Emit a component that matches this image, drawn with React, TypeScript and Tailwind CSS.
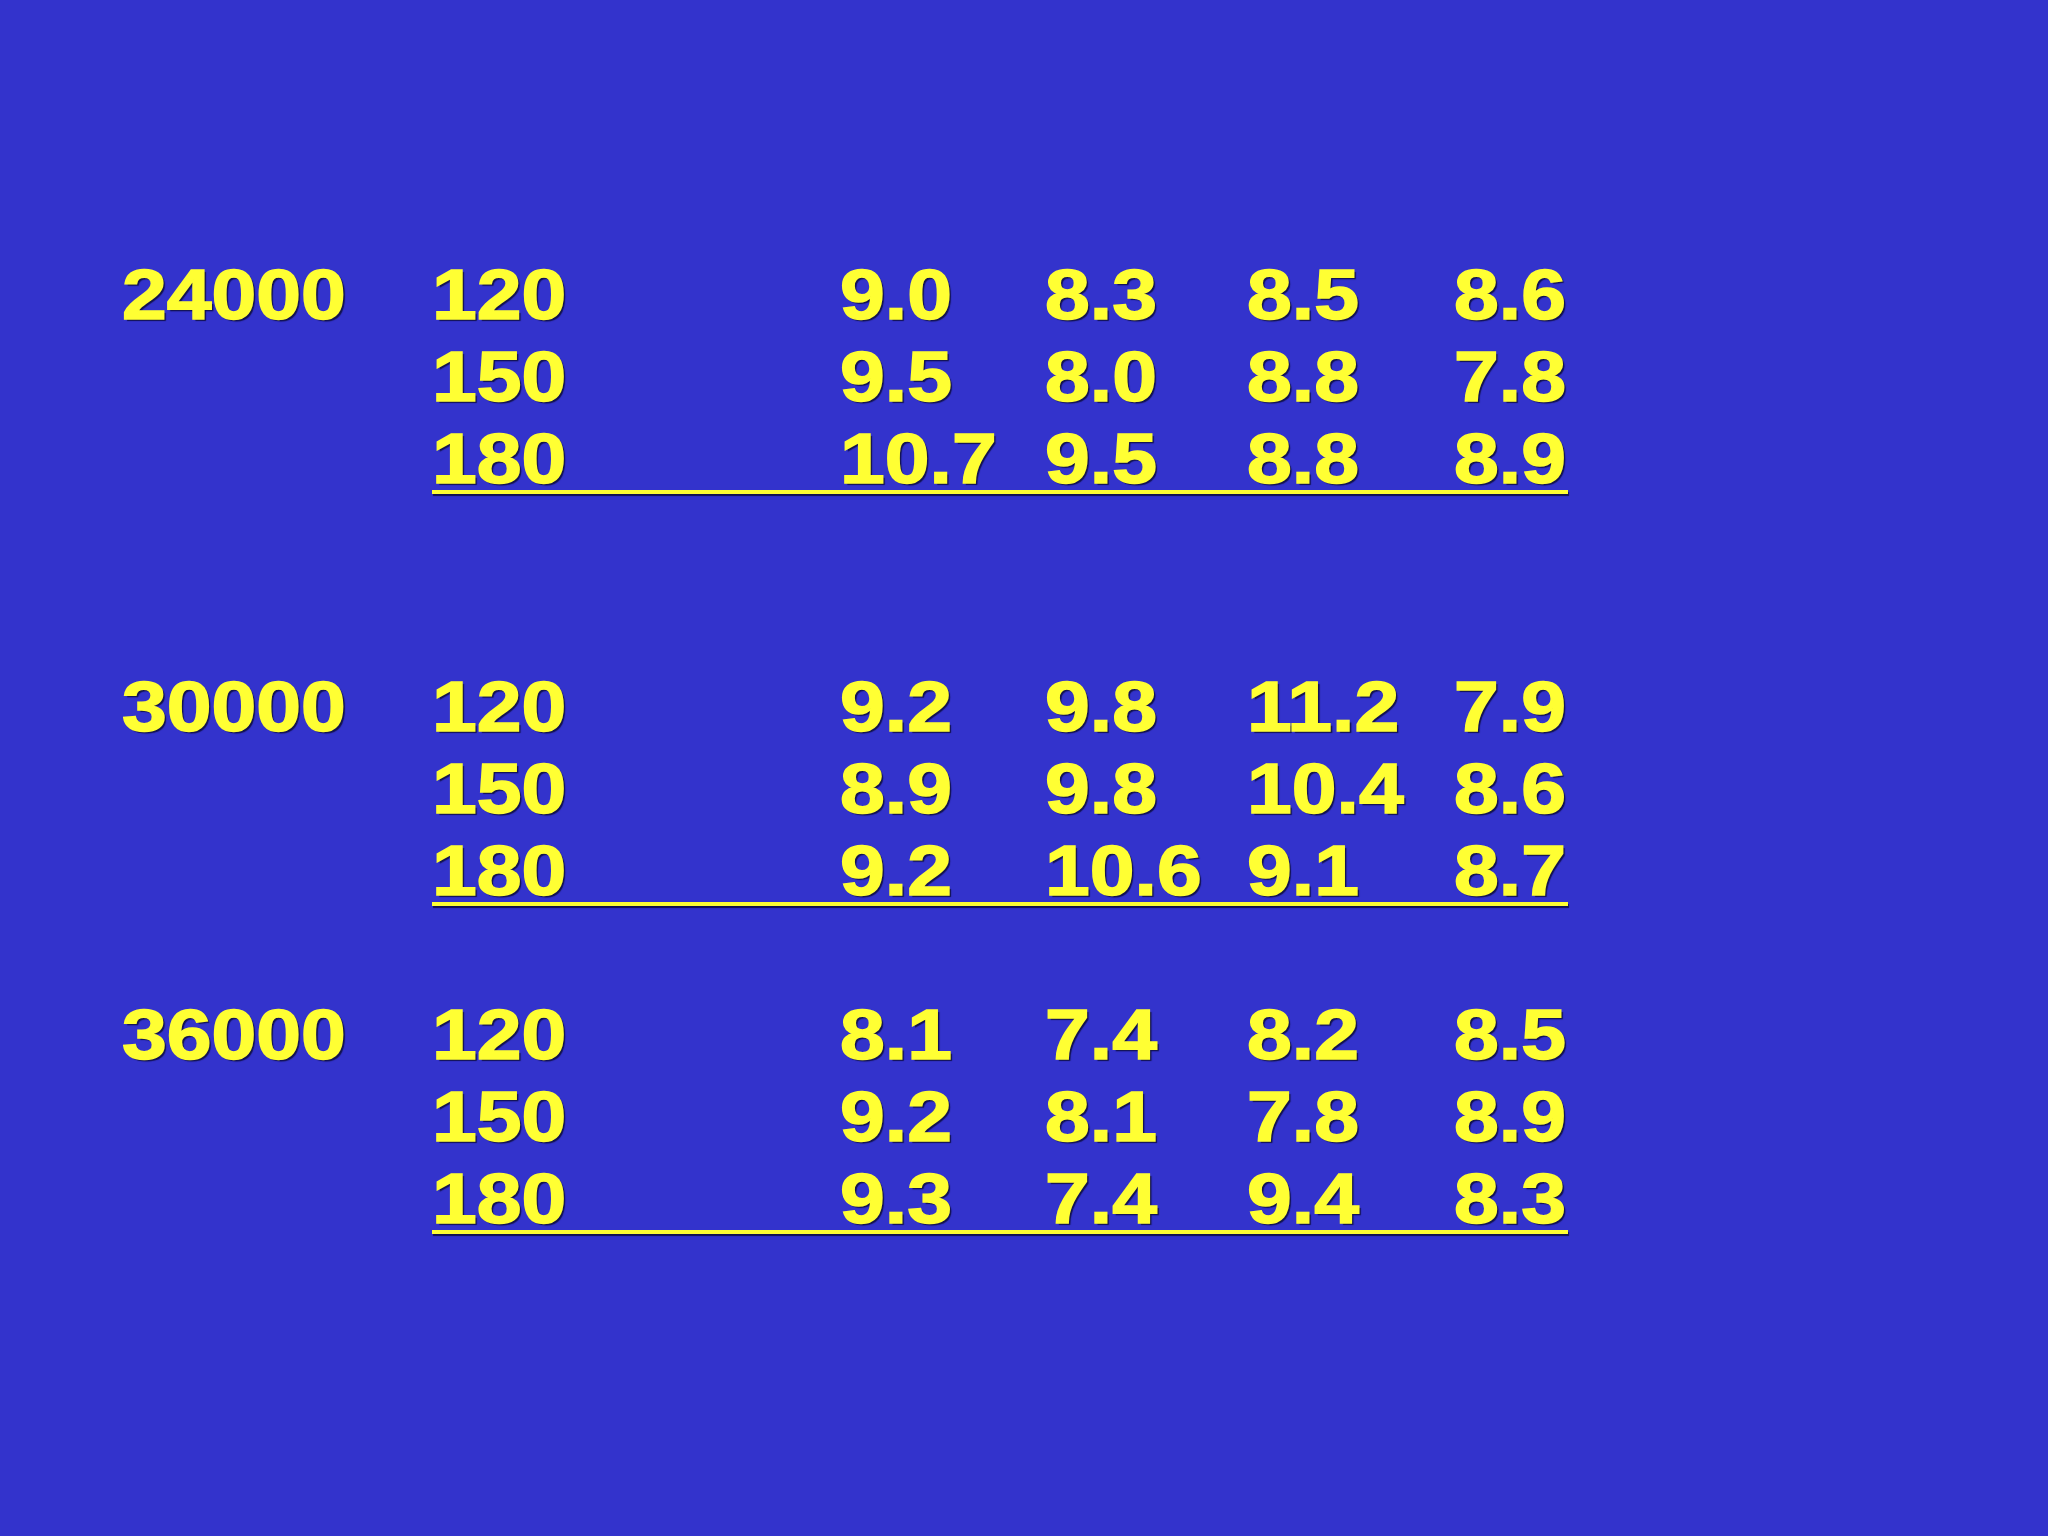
import React from "react";

type Group = { label: string; rows: { speed: string; vals: string[] }[] };

const groups: Group[] = [
  {
    label: "24000",
    rows: [
      { speed: "120", vals: ["9.0", "8.3", "8.5", "8.6"] },
      { speed: "150", vals: ["9.5", "8.0", "8.8", "7.8"] },
      { speed: "180", vals: ["10.7", "9.5", "8.8", "8.9"] },
    ],
  },
  {
    label: "30000",
    rows: [
      { speed: "120", vals: ["9.2", "9.8", "11.2", "7.9"] },
      { speed: "150", vals: ["8.9", "9.8", "10.4", "8.6"] },
      { speed: "180", vals: ["9.2", "10.6", "9.1", "8.7"] },
    ],
  },
  {
    label: "36000",
    rows: [
      { speed: "120", vals: ["8.1", "7.4", "8.2", "8.5"] },
      { speed: "150", vals: ["9.2", "8.1", "7.8", "8.9"] },
      { speed: "180", vals: ["9.3", "7.4", "9.4", "8.3"] },
    ],
  },
];

function Cell({ children }: { children: React.ReactNode }) {
  return (
    <div className="whitespace-nowrap">
      <span className="inline-block origin-left scale-x-[1.15]">{children}</span>
    </div>
  );
}

export default function App() {
  const groupMargins = ["mt-0", "mt-[172px]", "mt-[88px]"];
  return (
    <div
      className="w-full h-[1536px] overflow-hidden bg-[#3333cc] text-[#ffff33] font-bold text-[70px] leading-[82px] pt-[254px] [text-shadow:2px_2px_1px_#12124f] [-webkit-text-stroke:1.5px_#ffff33]"
      style={{ fontFamily: '"Liberation Sans", Arial, sans-serif' }}
    >
      {groups.map((g, gi) => (
        <div key={g.label} className={groupMargins[gi]}>
          {g.rows.map((r, ri) => (
            <div
              key={r.speed}
              className="grid grid-cols-[310px_408px_205px_202px_207px_auto] pl-[122px]"
            >
              <Cell>{ri === 0 ? g.label : ""}</Cell>
              <Cell>{r.speed}</Cell>
              {r.vals.map((v, vi) => (
                <Cell key={vi}>{v}</Cell>
              ))}
            </div>
          ))}
          <div className="ml-[432px] w-[1136px] h-[4px] -mt-[10px] bg-[#ffff33] shadow-[1px_2px_1px_#12124f]" />
        </div>
      ))}
    </div>
  );
}
